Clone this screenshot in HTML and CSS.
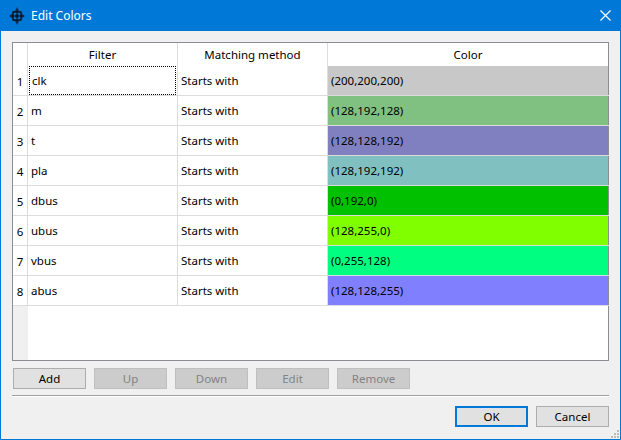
FILE: index.html
```html
<!DOCTYPE html>
<html lang="en">
<head>
    <meta charset="UTF-8">
    <title>Edit Colors</title>
    <link rel="stylesheet" href="styles.css">
</head>
<body>
    <div class="window">
        <div class="titlebar">
            <svg class="app-icon" width="20" height="20" viewBox="0 0 20 20">
                <path d="M10 1 L13 6 L18 10 L13 14 L10 19 L7 14 L2 10 L7 6 Z" fill="#1f3f6e"/>
                <rect x="6" y="6" width="8" height="8" fill="#0078d7" stroke="#06101f" stroke-width="1.4"/>
                <rect x="8.5" y="8.5" width="3" height="3" fill="#06101f"/>
                <path d="M10 3 V17 M3 10 H17" stroke="#06101f" stroke-width="1"/>
            </svg>
            <span class="title">Edit Colors</span>
            <svg class="close-icon" width="11" height="11" viewBox="0 0 11 11">
                <path d="M0.5 0.5 L10.5 10.5 M10.5 0.5 L0.5 10.5" stroke="#fff" stroke-width="1.2"/>
            </svg>
        </div>
        <div class="content">
            <div class="table-frame">
                <div class="row-numbers">
                    <div class="corner"></div>
                    <div class="num">1</div>
                    <div class="num">2</div>
                    <div class="num">3</div>
                    <div class="num">4</div>
                    <div class="num">5</div>
                    <div class="num">6</div>
                    <div class="num">7</div>
                    <div class="num">8</div>
                </div>
                <div class="grid">
                    <div class="head-row">
                        <div class="head col-filter">Filter</div>
                        <div class="head col-method">Matching method</div>
                        <div class="head col-color">Color</div>
                    </div>
                    <div class="row">
                        <div class="cell col-filter"><span class="focus">clk</span></div>
                        <div class="cell col-method">Starts with</div>
                        <div class="cell col-color" style="background: rgb(200,200,200)">(200,200,200)</div>
                    </div>
                    <div class="row">
                        <div class="cell col-filter">m</div>
                        <div class="cell col-method">Starts with</div>
                        <div class="cell col-color" style="background: rgb(128,192,128)">(128,192,128)</div>
                    </div>
                    <div class="row">
                        <div class="cell col-filter">t</div>
                        <div class="cell col-method">Starts with</div>
                        <div class="cell col-color" style="background: rgb(128,128,192)">(128,128,192)</div>
                    </div>
                    <div class="row">
                        <div class="cell col-filter">pla</div>
                        <div class="cell col-method">Starts with</div>
                        <div class="cell col-color" style="background: rgb(128,192,192)">(128,192,192)</div>
                    </div>
                    <div class="row">
                        <div class="cell col-filter">dbus</div>
                        <div class="cell col-method">Starts with</div>
                        <div class="cell col-color" style="background: rgb(0,192,0)">(0,192,0)</div>
                    </div>
                    <div class="row">
                        <div class="cell col-filter">ubus</div>
                        <div class="cell col-method">Starts with</div>
                        <div class="cell col-color" style="background: rgb(128,255,0)">(128,255,0)</div>
                    </div>
                    <div class="row">
                        <div class="cell col-filter">vbus</div>
                        <div class="cell col-method">Starts with</div>
                        <div class="cell col-color" style="background: rgb(0,255,128)">(0,255,128)</div>
                    </div>
                    <div class="row">
                        <div class="cell col-filter">abus</div>
                        <div class="cell col-method">Starts with</div>
                        <div class="cell col-color" style="background: rgb(128,128,255)">(128,128,255)</div>
                    </div>
                </div>
            </div>
            <div class="actions">
                <button class="btn">Add</button>
                <button class="btn off">Up</button>
                <button class="btn off">Down</button>
                <button class="btn off">Edit</button>
                <button class="btn off">Remove</button>
            </div>
            <div class="separator"></div>
            <div class="footer">
                <button class="btn default">OK</button>
                <button class="btn">Cancel</button>
            </div>
        </div>
        <svg class="grip" width="8" height="8" viewBox="0 0 8 8">
            <path d="M6 0h2v2H6z M3 3h2v2H3z M6 3h2v2H6z M0 6h2v2H0z M3 6h2v2H3z M6 6h2v2H6z" fill="#bcbcbc"/>
        </svg>
    </div>
</body>
</html>
```

FILE: styles.css
```css
* {
    box-sizing: border-box;
}
html, body {
    margin: 0;
    padding: 0;
}
body {
    font-family: "Noto Sans", "Open Sans", sans-serif;
    font-size: 11.5px;
    color: #000;
    background: #f0f0f0;
}
.window {
    position: relative;
    width: 621px;
    height: 440px;
    border: 1px solid #0078d7;
    border-top: 0;
    background: #f0f0f0;
    display: flex;
    flex-direction: column;
}
.titlebar {
    height: 31px;
    flex: none;
    background: #0078d7;
    color: #fff;
    display: flex;
    align-items: center;
    padding-left: 7px;
    padding-right: 10px;
    margin: 0 -1px;
    font-size: 12px;
}
.app-icon {
    margin-right: 4px;
}
.title {
    flex: 1;
}
.close-icon {
    display: block;
}
.content {
    flex: 1;
    padding: 11px 12px 12px 11px;
    display: flex;
    flex-direction: column;
}
.table-frame {
    height: 319px;
    width: 597px;
    border: 1px solid #8a8d92;
    display: flex;
    background: #fff;
    flex: none;
}
.row-numbers {
    width: 15px;
    flex: none;
    background: #f0f0f0;
}
.corner {
    height: 23px;
    background: #fff;
    border-right: 1px solid #dcdcdc;
}
.num {
    height: 30px;
    padding-top: 8px;
    line-height: 16px;
    text-align: center;
    background: #fff;
    border-right: 1px solid #dcdcdc;
    border-bottom: 1px solid #dcdcdc;
}
.grid {
    flex: 1;
}
.head-row, .row {
    display: flex;
}
.head {
    height: 23px;
    line-height: 23px;
    text-align: center;
    border-right: 1px solid #dcdcdc;
}
.row {
    height: 30px;
    border-bottom: 1px solid #dcdcdc;
}
.cell {
    height: 29px;
    line-height: 29px;
    padding-left: 3px;
    border-right: 1px solid #dcdcdc;
}
.col-filter, .col-method {
    width: 150px;
}
.col-color {
    width: 280px;
    border-right: 0;
}
.cell.col-color {
    margin-right: 1px;
}
.cell.col-filter {
    padding: 0;
}
.row .col-filter {
    padding-left: 3px;
}
.focus {
    display: block;
    height: 29px;
    margin-left: -1px;
    margin-right: 1px;
    padding-left: 2px;
    border: 1px dotted #000;
    line-height: 27px;
}
.row:nth-child(2) .col-filter {
    padding-left: 2px;
}
.actions {
    display: flex;
    gap: 8px;
    margin-top: 7px;
    padding-left: 1px;
}
.btn {
    width: 73px;
    height: 21px;
    padding: 0;
    font: inherit;
    color: #000;
    background: #e1e1e1;
    border: 1px solid #adadad;
}
.btn.off {
    background: #cccccc;
    border-color: #bfbfbf;
    color: #838383;
}
.btn.default {
    border: 2px solid #0078d7;
}
.separator {
    height: 2px;
    margin-top: 6px;
    width: 597px;
    background: #a0a0a0;
    border-bottom: 1px solid #fff;
}
.footer {
    display: flex;
    justify-content: flex-end;
    gap: 8px;
    margin-top: 9px;
    padding-right: 0;
    width: 597px;
}
.grip {
    position: absolute;
    right: 1px;
    bottom: 1px;
}
```
